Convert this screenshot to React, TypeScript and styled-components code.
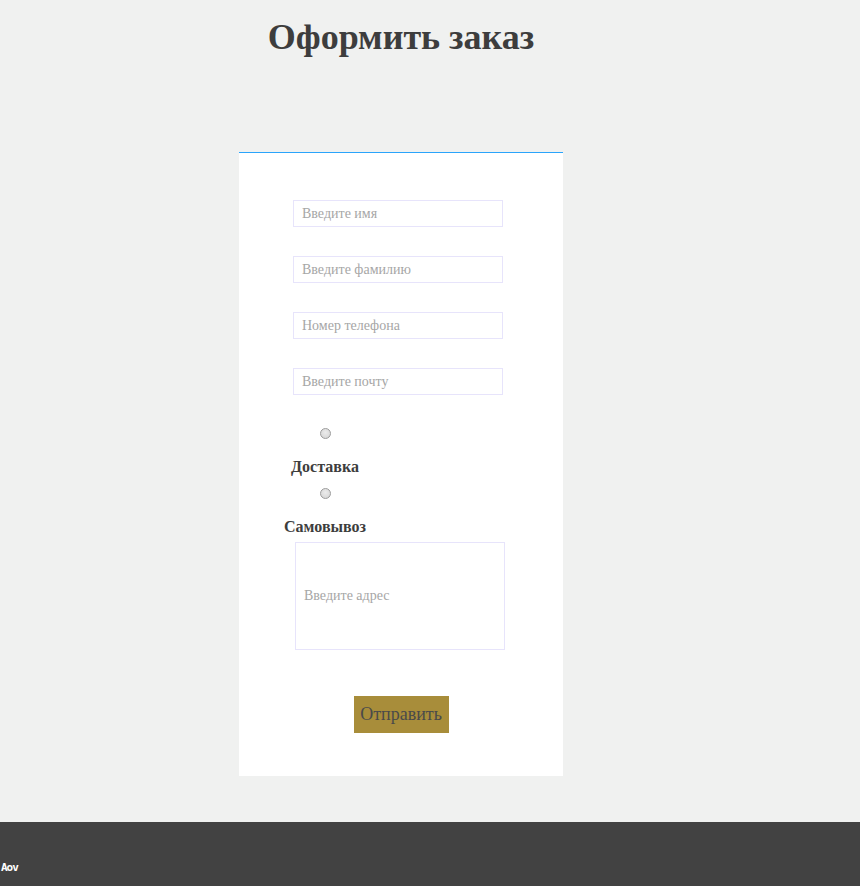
import styled, { createGlobalStyle } from 'styled-components';

const GlobalStyle = createGlobalStyle`
  html, body {
    margin: 0;
    padding: 0;
    background-color: #f0f1f0;
    font-family: 'Liberation Serif', 'Times New Roman', serif;
  }
`;

const Page = styled.div`
  display: flex;
  flex-direction: column;
  min-height: 886px;
`;

const Main = styled.main`
  width: 802px;
  display: flex;
  flex-direction: column;
  align-items: center;
  padding-bottom: 46px;
`;

const Title = styled.h1`
  margin: 14px 0 0;
  font-size: 36px;
  font-weight: bold;
  line-height: 46px;
  color: #3d3d3d;
`;

const Card = styled.form`
  margin-top: 92px;
  width: 324px;
  height: 624px;
  background: #fff;
  border-top: 1px solid #2aa4fb;
  box-sizing: border-box;
  padding-top: 47px;
  display: flex;
  flex-direction: column;
`;

const Field = styled.input<{ $tall?: boolean }>`
  box-sizing: border-box;
  width: 210px;
  height: ${({ $tall }) => ($tall ? '108px' : '27px')};
  margin: 0 0 29px 54px;
  padding: 0 8px;
  border: 1px solid #e7e4fb;
  background: #fff;
  font-family: 'Liberation Serif', 'Times New Roman', serif;
  font-size: 14px;
  color: #333;
  outline: none;

  &::placeholder {
    color: #a6a6a6;
  }
`;

const AddressField = styled(Field)`
  margin: 6px 0 0 56px;
`;

const Option = styled.label<{ $gap: number }>`
  width: 100px;
  margin: ${({ $gap }) => $gap}px 0 0 36px;
  display: flex;
  flex-direction: column;
  align-items: center;
`;

// light grey radio dot, as the old system widget draws it
const Radio = styled.input`
  appearance: none;
  width: 11px;
  height: 11px;
  margin: 0;
  border: 1px solid #9c9c9c;
  border-radius: 50%;
  background: radial-gradient(circle at 50% 40%, #ececec, #d2d2d2);
  box-sizing: border-box;

  &:checked {
    background: radial-gradient(circle, #555 0 2px, #d8d8d8 3px);
  }
`;

const OptionText = styled.span`
  margin-top: 19px;
  font-size: 16px;
  font-weight: bold;
  line-height: 18px;
  color: #3d3d3d;
`;

const Submit = styled.button`
  align-self: center;
  margin-top: 46px;
  width: 95px;
  height: 37px;
  border: none;
  background: #a88d3a;
  color: #4a4a4a;
  font-family: 'Liberation Serif', 'Times New Roman', serif;
  font-size: 18px;
  padding: 0;
  cursor: pointer;
`;

const Footer = styled.footer`
  flex: 1;
  background: #424242;
  display: flex;
  align-items: flex-end;
  padding-bottom: 12px;
`;

const FooterMark = styled.span`
  margin-left: 1px;
  font-family: 'DejaVu Sans Mono', monospace;
  font-size: 11px;
  font-weight: bold;
  color: #fff;
  letter-spacing: -1px;
`;

export default function App() {
  return (
    <Page>
      <GlobalStyle />
      <Main>
        <Title>Оформить заказ</Title>
        <Card onSubmit={(e) => e.preventDefault()}>
          <Field type="text" placeholder="Введите имя" />
          <Field type="text" placeholder="Введите фамилию" />
          <Field type="tel" placeholder="Номер телефона" />
          <Field type="email" placeholder="Введите почту" />
          <Option $gap={4}>
            <Radio type="radio" name="delivery" />
            <OptionText>Доставка</OptionText>
          </Option>
          <Option $gap={12}>
            <Radio type="radio" name="delivery" />
            <OptionText>Самовывоз</OptionText>
          </Option>
          <AddressField $tall type="text" placeholder="Введите адрес" />
          <Submit type="submit">Отправить</Submit>
        </Card>
      </Main>
      <Footer>
        <FooterMark>Aov</FooterMark>
      </Footer>
    </Page>
  );
}
